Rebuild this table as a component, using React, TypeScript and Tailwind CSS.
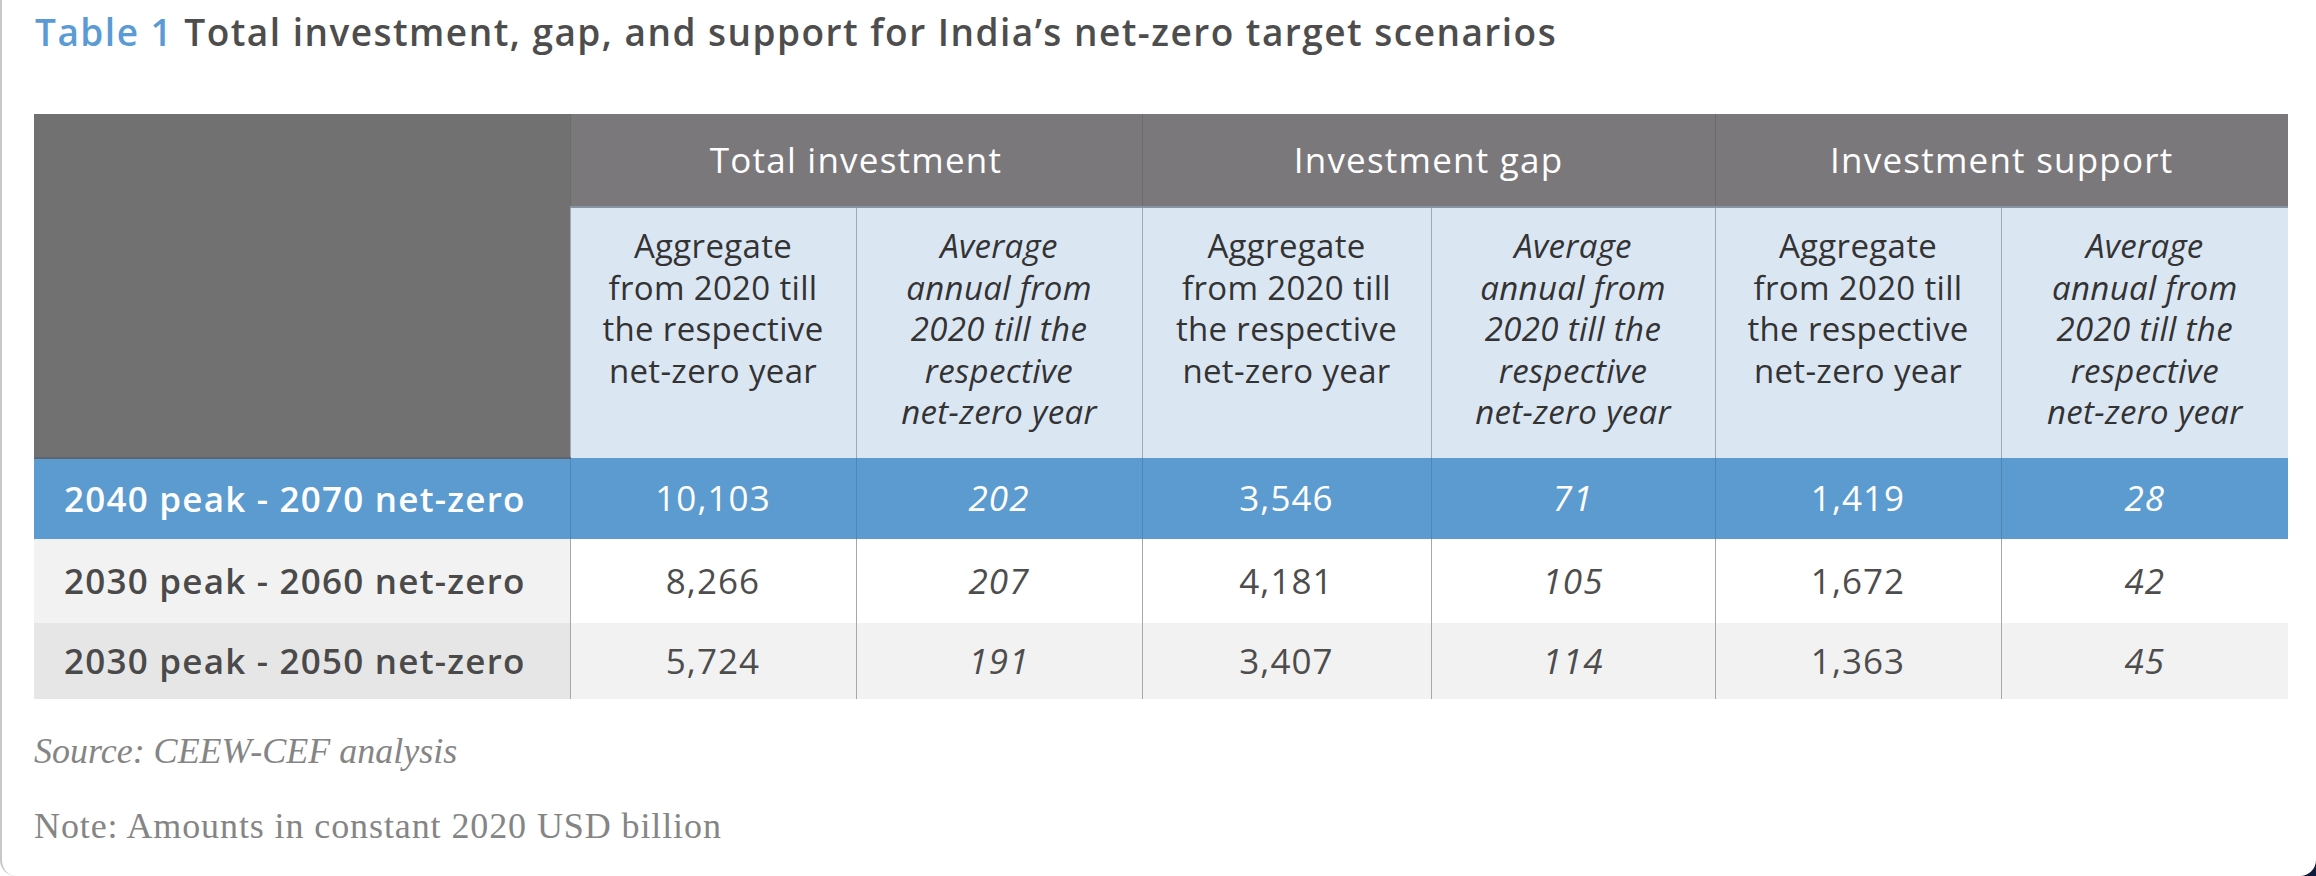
import React from "react";

const groups = ["Total investment", "Investment gap", "Investment support"];

const rows = [
  {
    label: "2040 peak - 2070 net-zero",
    values: ["10,103", "202", "3,546", "71", "1,419", "28"],
    tone: "blue",
  },
  {
    label: "2030 peak - 2060 net-zero",
    values: ["8,266", "207", "4,181", "105", "1,672", "42"],
    tone: "white",
  },
  {
    label: "2030 peak - 2050 net-zero",
    values: ["5,724", "191", "3,407", "114", "1,363", "45"],
    tone: "grey",
  },
];

const rowStyles = {
  blue: {
    row: "h-[81px]",
    label: "bg-[#5b9bd0] text-white border-t-2 border-[#5d6570]",
    cell: "bg-[#5b9bd0] text-white border-l border-[#4f86b4]",
  },
  white: {
    row: "h-[84px]",
    label: "bg-[#f2f2f2] text-[#4a4a4a]",
    cell: "bg-white text-[#4d4d4d] border-l border-[#a8a8a8]",
  },
  grey: {
    row: "h-[76px]",
    label: "bg-[#e6e6e6] text-[#4a4a4a]",
    cell: "bg-[#f2f2f2] text-[#4d4d4d] border-l border-[#a8a8a8]",
  },
};

function SubHead({ italic }: { italic: boolean }) {
  return (
    <th className="border-l border-[#a3a9b1] bg-[#dbe6f3] px-1 pt-[17px] align-top text-[33px] leading-[41.5px] font-normal tracking-[0.01em] text-[#333333]">
      {italic ? (
        <span className="italic">
          Average
          <br />
          annual from
          <br />
          2020 till the
          <br />
          respective
          <br />
          net-zero year
        </span>
      ) : (
        <span>
          Aggregate
          <br />
          from 2020 till
          <br />
          the respective
          <br />
          net-zero year
        </span>
      )}
    </th>
  );
}

export default function App() {
  return (
    <div className="h-[876px] w-[2316px] bg-[linear-gradient(to_right,#ffffff_50%,#0f1b3d_50%)]">
      <div
        className="h-full w-full overflow-hidden rounded-b-[16px] border-l-2 border-[#c8c8c8] bg-white"
        style={{ fontFamily: '"Open Sans", "Noto Sans", sans-serif' }}
      >
        <h1 className="pt-[6px] pl-[33px] text-[37px] leading-[52px] font-semibold tracking-[0.04em] whitespace-nowrap text-[#4d4d4d]">
          <span className="text-[#5b9bd5]">Table 1</span> Total investment, gap,
          and support for India’s net-zero target scenarios
        </h1>

        <table className="mt-[56px] ml-[32px] w-[2254px] table-fixed border-collapse">
          <colgroup>
            <col className="w-[536px]" />
            <col className="w-[286px]" />
            <col className="w-[286px]" />
            <col className="w-[289px]" />
            <col className="w-[284px]" />
            <col className="w-[286px]" />
            <col className="w-[287px]" />
          </colgroup>
          <thead>
            <tr className="h-[93px]">
              <th rowSpan={2} className="bg-[#717171]" />
              {groups.map((g) => (
                <th
                  key={g}
                  colSpan={2}
                  className="border-b-2 border-l border-b-[#8794a5] border-l-[#6c6a6d] bg-[#7a787b] text-[35px] font-normal tracking-[0.035em] text-white"
                >
                  {g}
                </th>
              ))}
            </tr>
            <tr className="h-[251px]">
              {[0, 1, 2, 3, 4, 5].map((i) => (
                <SubHead key={i} italic={i % 2 === 1} />
              ))}
            </tr>
          </thead>
          <tbody>
            {rows.map((r) => {
              const s = rowStyles[r.tone as keyof typeof rowStyles];
              return (
                <tr key={r.label} className={s.row}>
                  <td
                    className={`${s.label} pl-[30px] text-[35px] font-semibold tracking-[0.035em] whitespace-nowrap`}
                  >
                    {r.label}
                  </td>
                  {r.values.map((v, i) => (
                    <td
                      key={i}
                      className={`${s.cell} text-center text-[35px] tracking-[0.03em] ${
                        i % 2 === 1 ? "italic" : ""
                      }`}
                    >
                      {v}
                    </td>
                  ))}
                </tr>
              );
            })}
          </tbody>
        </table>

        <div
          className="pl-[32px] text-[36px] text-[#858585]"
          style={{ fontFamily: '"Liberation Serif", "DejaVu Serif", serif' }}
        >
          <p className="mt-[32px] leading-[41px] italic">
            Source: CEEW-CEF analysis
          </p>
          <p className="mt-[34px] leading-[41px] tracking-[0.025em]">
            Note: Amounts in constant 2020 USD billion
          </p>
        </div>
      </div>
    </div>
  );
}
